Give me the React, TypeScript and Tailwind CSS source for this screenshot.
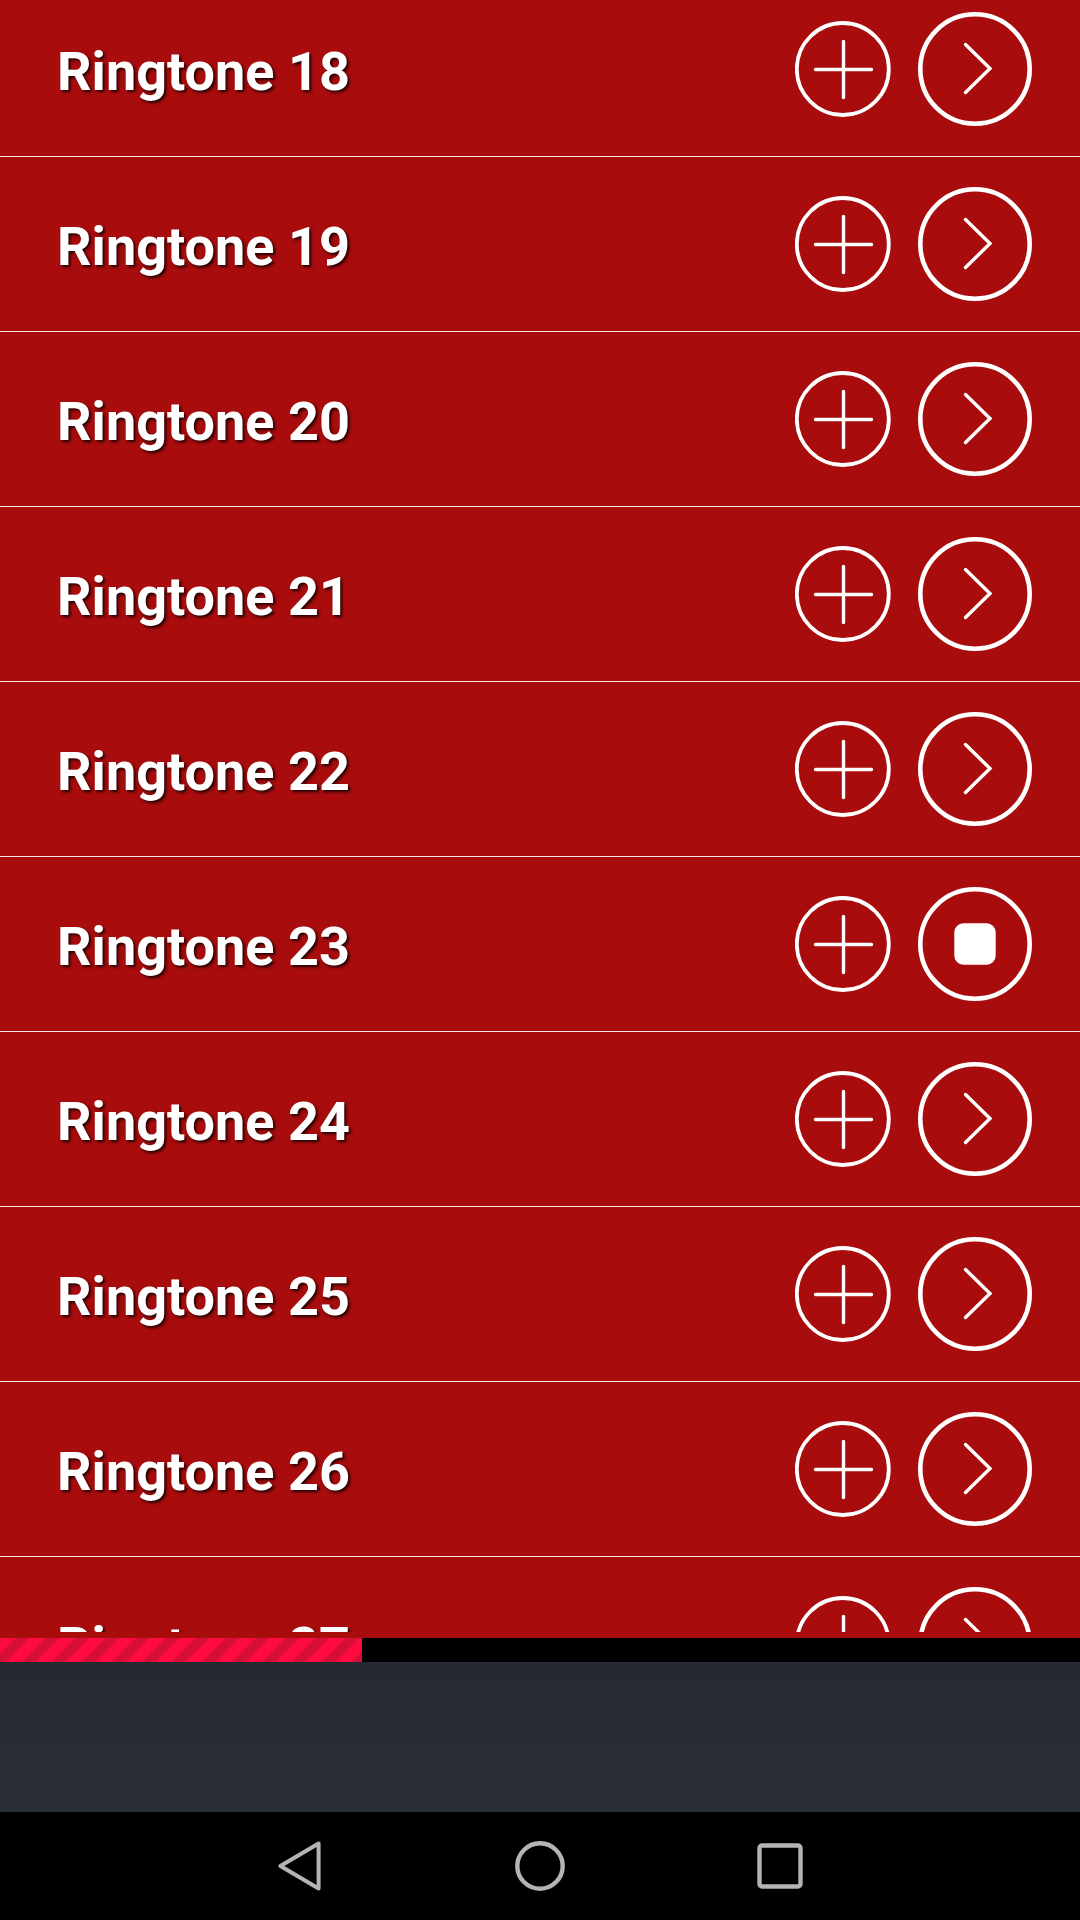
import { useState } from "react"

const ringtones = Array.from({ length: 10 }, (_, i) => ({
  id: i + 18,
  name: `Ringtone ${i + 18}`,
}))

const AddIcon = () => (
  <svg viewBox="0 0 96 96" className="size-24" fill="none" stroke="currentColor" aria-hidden="true">
    <circle cx="47.8" cy="48" r="46" strokeWidth="3.8" />
    <path d="M20.5 48.5h56M48.5 20.5v56" strokeWidth="3.4" strokeLinecap="round" />
  </svg>
)

const PlayIcon = () => (
  <svg viewBox="0 0 114 114" className="size-[114px]" fill="none" stroke="currentColor" aria-hidden="true">
    <circle cx="57" cy="57" r="54.7" strokeWidth="4.6" />
    <path d="M47.5 32.5L72 56.5L47.5 80.5" strokeWidth="3.4" strokeLinecap="round" />
  </svg>
)

const StopIcon = () => (
  <svg viewBox="0 0 114 114" className="size-[114px]" fill="none" stroke="currentColor" aria-hidden="true">
    <circle cx="57" cy="57" r="54.7" strokeWidth="4.6" />
    <rect x="36.3" y="36.3" width="41.4" height="41.4" rx="9" fill="currentColor" stroke="none" />
  </svg>
)

const NavBar = () => (
  <nav className="flex h-[108px] items-center justify-center gap-[191px] bg-black text-[#b4b4b4]">
    <button type="button" aria-label="Back">
      <svg viewBox="0 0 48 50" className="h-[50px] w-12" fill="none" stroke="currentColor" strokeWidth="4" strokeLinejoin="round">
        <path d="M4.4 25L42.6 2.6V47.4Z" />
      </svg>
    </button>
    <button type="button" aria-label="Home">
      <svg viewBox="0 0 50 50" className="size-[50px]" fill="none" stroke="currentColor" strokeWidth="4.4">
        <circle cx="25" cy="25" r="22.7" />
      </svg>
    </button>
    <button type="button" aria-label="Recent apps">
      <svg viewBox="0 0 48 50" className="h-[50px] w-12" fill="none" stroke="currentColor" strokeWidth="4.4">
        <rect x="3.5" y="4.5" width="41" height="41" rx="2.5" />
      </svg>
    </button>
  </nav>
)

export default function App() {
  const [playing, setPlaying] = useState<number | null>(23)

  return (
    <div className="flex h-screen flex-col overflow-hidden bg-black font-[Roboto,sans-serif]">
      <main className="flex min-h-0 flex-1 flex-col bg-[#a80c0d] pb-1.5">
        <div className="min-h-0 flex-1 overflow-hidden">
          {/* list is scrolled slightly past the top of the first row */}
          <ul className="-mt-[18px]">
            {ringtones.map((tone) => (
              <li
                key={tone.id}
                className="flex h-[175px] items-center border-b border-[#f6e4e4] pr-12 pl-[57px] text-white"
              >
                <span className="grow pt-1.5 text-[54px] leading-[64px] font-bold [text-shadow:2px_2px_3px_rgba(0,0,0,0.8)]">
                  {tone.name}
                </span>
                <div className="flex shrink-0 items-center gap-[27px]">
                  <button type="button" aria-label={`Add ${tone.name}`}>
                    <AddIcon />
                  </button>
                  <button
                    type="button"
                    aria-label={playing === tone.id ? `Stop ${tone.name}` : `Play ${tone.name}`}
                    onClick={() => setPlaying(playing === tone.id ? null : tone.id)}
                  >
                    {playing === tone.id ? <StopIcon /> : <PlayIcon />}
                  </button>
                </div>
              </li>
            ))}
          </ul>
        </div>
      </main>

      <div className="h-6 bg-black">
        <div className="h-full w-[33.5%] bg-[#ff0b40] bg-[linear-gradient(135deg,#ff0b40_24%,#d60e38_28%,#d60e38_47%,#ff0b40_51%,#ff0b40_74%,#d60e38_78%,#d60e38_97%,#ff0b40)] bg-size-[30px_30px]" />
      </div>

      <div className="h-[150px] bg-linear-to-b from-[#252a32] to-[#2a2e37]" />

      <NavBar />
    </div>
  )
}
